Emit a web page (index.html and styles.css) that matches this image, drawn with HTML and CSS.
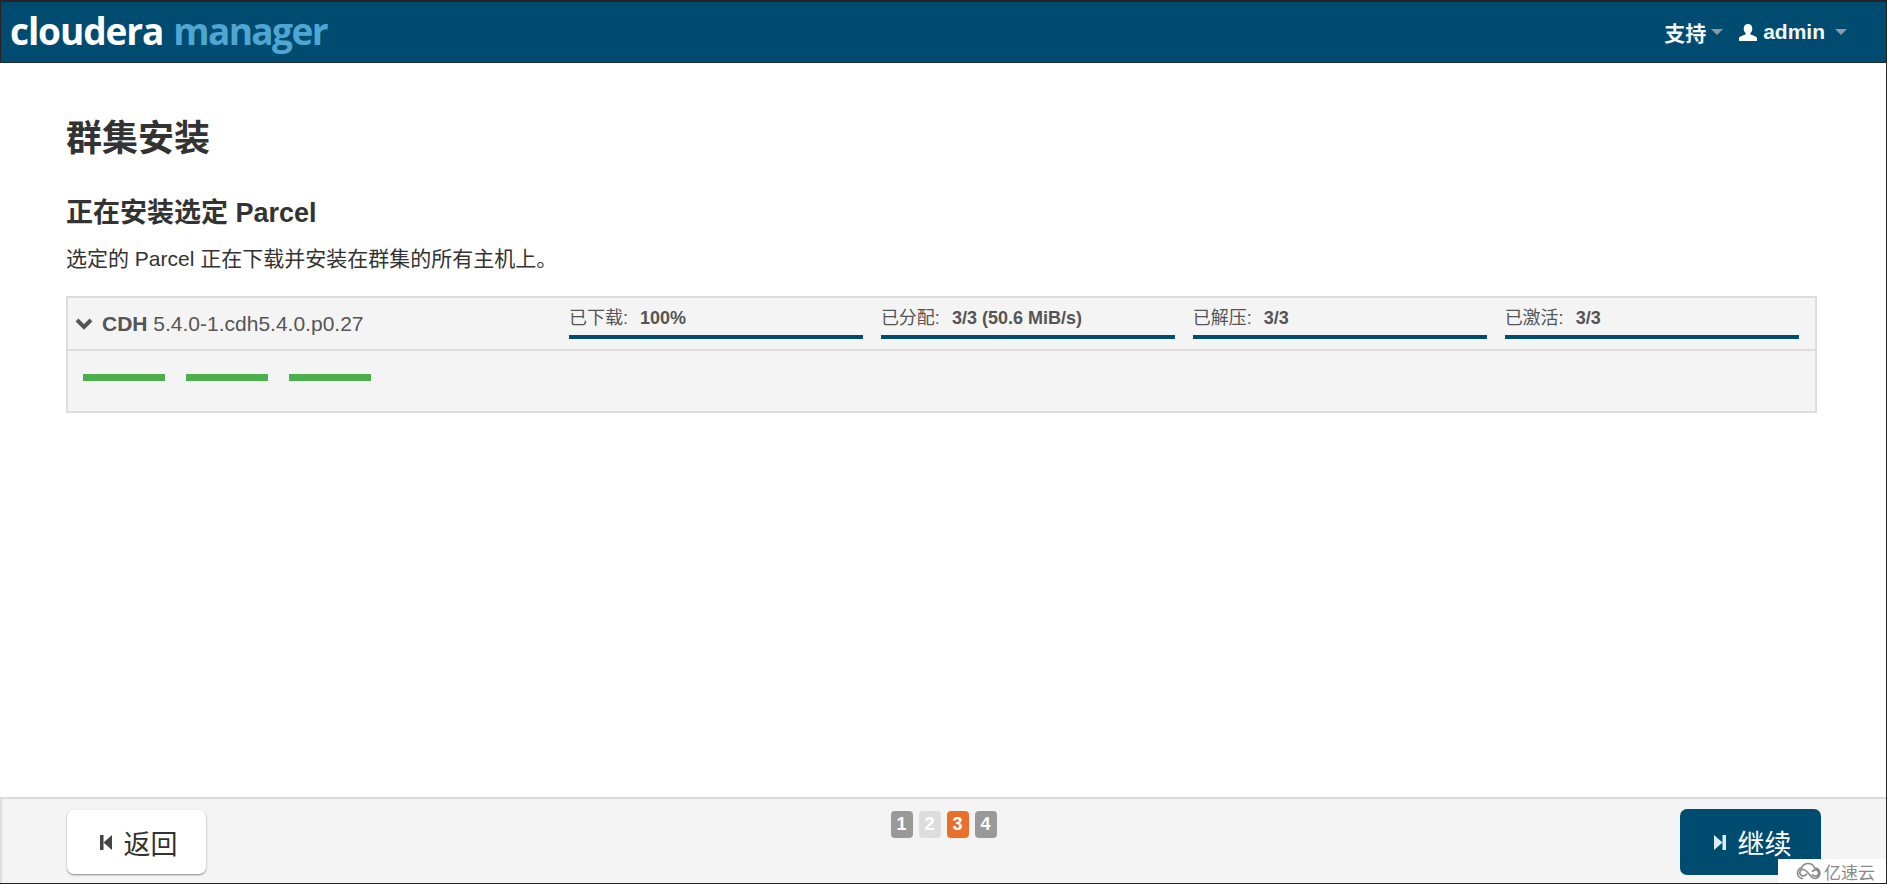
FILE: index.html
```html
<!DOCTYPE html>
<html lang="zh-CN">
<head>
    <meta charset="UTF-8">
    <title>群集安装 - Cloudera Manager</title>
    <link rel="stylesheet" href="styles.css">
</head>
<body>
<div class="page">
    <header class="topbar">
        <div class="logo"><span class="logo-a">cloudera</span><span class="logo-b">manager</span></div>
        <nav class="topnav">
            <span class="navitem">支持<i class="caret"></i></span>
            <span class="navitem user">
                <svg class="user-icon" viewBox="0 0 18 17" width="18" height="17"><path d="M9 0c2.700 0 4.300 2 4.300 4.700 0 1.800-.8 3.400-1.900 4.400v1.300c2.200.6 6.600 1.800 6.600 3.800V17H0v-2.800c0-2 4.400-3.200 6.600-3.800V9.100C5.500 8.100 4.700 6.500 4.700 4.700 4.700 2 6.300 0 9 0z" fill="#fff"/></svg>
                admin<i class="caret caret-far"></i>
            </span>
        </nav>
    </header>

    <main class="content">
        <h1>群集安装</h1>
        <h2>正在安装选定 Parcel</h2>
        <p class="desc">选定的 Parcel 正在下载并安装在群集的所有主机上。</p>

        <section class="parcel">
            <div class="parcel-head">
                <div class="parcel-name">
                    <svg class="chevron" viewBox="0 0 18 12" width="18" height="12"><path d="M2 2l7 7 7-7" fill="none" stroke="#555" stroke-width="4"/></svg>
                    <span><b>CDH</b> 5.4.0-1.cdh5.4.0.p0.27</span>
                </div>
                <div class="stats">
                    <div class="stat"><div class="stat-text">已下载:<b>100%</b></div><div class="stat-bar"></div></div>
                    <div class="stat"><div class="stat-text">已分配:<b>3/3 (50.6 MiB/s)</b></div><div class="stat-bar"></div></div>
                    <div class="stat"><div class="stat-text">已解压:<b>3/3</b></div><div class="stat-bar"></div></div>
                    <div class="stat"><div class="stat-text">已激活:<b>3/3</b></div><div class="stat-bar"></div></div>
                </div>
            </div>
            <div class="hosts">
                <div class="host"></div>
                <div class="host"></div>
                <div class="host"></div>
            </div>
        </section>
    </main>

    <footer class="wizard">
        <button class="btn">
            <svg viewBox="0 0 12 15" width="12" height="15"><path d="M0 0h3.500v15H0zM3.500 7.500L12 0v15z" fill="#444"/></svg>
            返回
        </button>
        <div class="steps">
            <span class="step">1</span>
            <span class="step step-off">2</span>
            <span class="step step-on">3</span>
            <span class="step">4</span>
        </div>
        <button class="btn btn-primary">
            <svg viewBox="0 0 12 15" width="12" height="15"><path d="M0 0l8.500 7.500L0 15zM8.500 0H12v15H8.500z" fill="#d8eef5"/></svg>
            继续
        </button>
    </footer>

    <div class="watermark">
        <svg viewBox="0 0 26 18" width="26" height="18"><path d="M7 16.500a5.500 5.500 0 0 1-1-10.900C7 2.800 9.500 1.500 12 1.500c3 0 5.500 1.800 6.500 4.300a5.400 5.400 0 0 1 1 10.700c-3 0-4.500-2-6.500-4.500s-3.500-4.500-6-4.500a3.200 3.200 0 0 0 0 6.400c2 0 3-1 4-2.200M16 12.200c1 1.200 2 2 3.500 2a3.200 3.200 0 0 0 0-6.400c-1.500 0-2.500.8-3.500 2" fill="none" stroke="#8a8a8a" stroke-width="1.700"/></svg>
        亿速云
    </div>
</div>
</body>
</html>
```

FILE: styles.css
```css
* {
    box-sizing: border-box;
}
html, body {
    margin: 0;
    height: 100%;
}
body {
    font-family: "Liberation Sans", "Noto Sans CJK SC", sans-serif;
    color: #333;
    background: #fff;
    overflow: hidden;
}
.page {
    position: relative;
    display: flex;
    flex-direction: column;
    height: 884px;
    border-right: 1px solid #222;
    border-bottom: 1px solid #222;
}

/* top bar */
.topbar {
    flex: none;
    display: flex;
    justify-content: space-between;
    align-items: center;
    height: 63px;
    padding: 0 39px 0 9px;
    background: #004b70;
    border-top: 2px solid #2a2226;
    border-left: 1px solid #2a2226;
    border-bottom: 1px solid #1d2c36;
}
.logo {
    display: flex;
    gap: 10px;
    font-family: "Open Sans", sans-serif;
    font-size: 37px;
    font-weight: 700;
    line-height: 1;
    letter-spacing: -1.100px;
    margin-top: -3px;
}
.logo-a {
    color: #fff;
}
.logo-b {
    color: #4ea6d3;
    letter-spacing: -1.600px;
}
.topnav {
    display: flex;
    align-items: center;
    gap: 16px;
    font-size: 21px;
    font-weight: 700;
    color: #f2f6f8;
}
.navitem {
    display: flex;
    align-items: center;
}
.user-icon {
    margin-right: 6px;
}
.caret {
    width: 0;
    height: 0;
    margin-left: 5px;
    border-left: 6px solid transparent;
    border-right: 6px solid transparent;
    border-top: 6px solid #8d9aa3;
}
.caret-far {
    margin-left: 10px;
}

/* main */
.content {
    flex: 1;
    padding: 0 69px 0 66px;
}
h1 {
    margin: 53px 0 0;
    font-size: 36px;
    line-height: 46px;
    font-weight: 700;
    color: #333;
}
h2 {
    margin: 33px 0 0;
    font-size: 27px;
    line-height: 36px;
    font-weight: 700;
    color: #333;
}
.desc {
    margin: 14px 0 0;
    font-size: 21px;
    line-height: 28px;
    color: #333;
}
.parcel {
    height: 117px;
    margin-top: 23px;
    background: #f4f4f4;
    border: 2px solid #ddd;
}
.parcel-head {
    display: flex;
    height: 53px;
    border-bottom: 2px solid #ddd;
}
.parcel-name {
    flex: none;
    display: flex;
    align-items: center;
    width: 501px;
    padding-left: 7px;
    font-size: 21px;
    color: #555;
}
.chevron {
    margin-right: 9px;
}
.stats {
    flex: 1;
    display: grid;
    grid-template-columns: repeat(4, 1fr);
    gap: 17.500px;
    padding-right: 16px;
}
.stat-text {
    height: 37px;
    padding-top: 8px;
    font-size: 18px;
    line-height: 24px;
    color: #555;
}
.stat-text b {
    margin-left: 12px;
    font-size: 18px;
}
.stat-bar {
    height: 4px;
    background: #004b70;
}
.hosts {
    display: flex;
    gap: 21px;
    padding: 23px 0 0 15px;
}
.host {
    width: 82px;
    height: 7px;
    background: #4cae4c;
}

/* wizard footer */
.wizard {
    flex: none;
    display: flex;
    justify-content: space-between;
    height: 86px;
    padding: 11px 65px 0 65px;
    background: #f4f4f4;
    border-top: 2px solid #ddd;
    border-left: 2px solid #ddd;
}
.btn {
    display: flex;
    align-items: center;
    justify-content: center;
    gap: 12px;
    width: 139px;
    height: 64px;
    padding: 0 0 0 4px;
    border: 0;
    border-radius: 7px;
    background: #fff;
    box-shadow: 0 1px 2px rgba(0, 0, 0, 0.45);
    font-family: inherit;
    font-size: 27px;
    color: #333;
}
.btn-primary {
    width: 141px;
    height: 66px;
    margin-top: -1px;
    background: #004b70;
    color: #fff;
    box-shadow: none;
}
.steps {
    display: flex;
    gap: 6px;
    height: 27px;
    margin: 1px 0 0 1px;
}
.step {
    width: 22px;
    height: 27px;
    border-radius: 4px;
    background: #999;
    color: #fff;
    font-size: 18px;
    font-weight: 700;
    line-height: 27px;
    text-align: center;
}
.step-off {
    background: #ddd;
}
.step-on {
    background: #e8702a;
}
.watermark {
    position: absolute;
    right: 0;
    bottom: 0;
    display: flex;
    align-items: center;
    gap: 2px;
    width: 108px;
    height: 24px;
    padding-left: 18px;
    background: #fff;
    font-size: 17px;
    color: #8a8a8a;
}
```
